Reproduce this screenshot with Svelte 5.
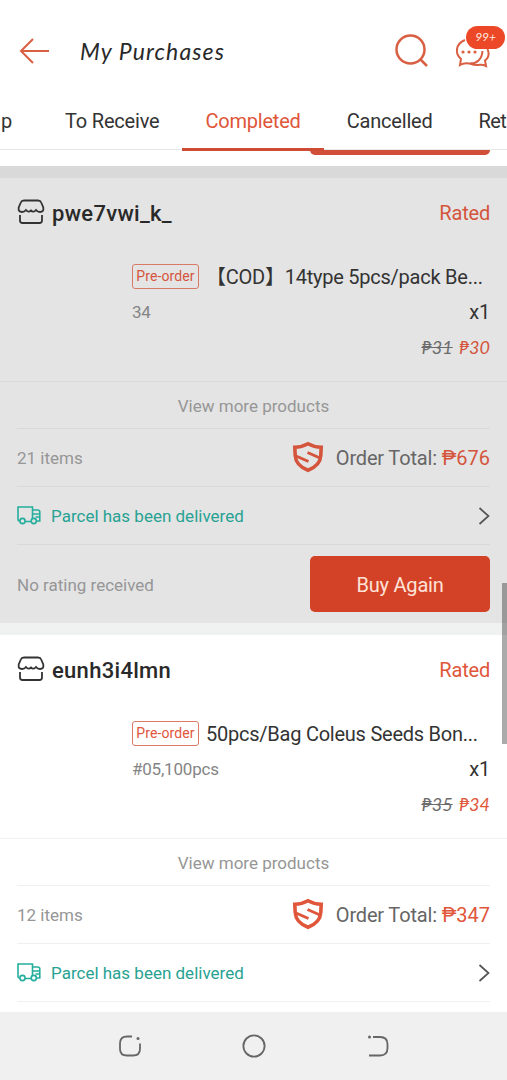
<script lang="ts">
    interface Order {
        shop: string;
        title: string;
        variation: string;
        oldPrice: number;
        price: number;
        items: number;
        total: number;
        pressed?: boolean;
        note?: string;
    }

    const orders: Order[] = [
        {
            shop: "pwe7vwi_k_",
            title: "【COD】14type 5pcs/pack Be...",
            variation: "34",
            oldPrice: 31,
            price: 30,
            items: 21,
            total: 676,
            pressed: true,
            note: "No rating received",
        },
        {
            shop: "eunh3i4lmn",
            title: "50pcs/Bag Coleus Seeds Bon...",
            variation: "#05,100pcs",
            oldPrice: 35,
            price: 34,
            items: 12,
            total: 347,
        },
    ];

    const tabs = ["p", "To Receive", "Completed", "Cancelled", "Ret"];
    let active = $state("Completed");
</script>

<div class="screen">
    <header>
        <svg class="back" width="32" height="28" viewBox="0 0 32 28">
            <path d="M15 2 L3 14 L15 26 M3 14 H31" />
        </svg>
        <h1>My Purchases</h1>
        <svg class="search" width="36" height="36" viewBox="0 0 36 36">
            <circle cx="16.5" cy="16.5" r="14" />
            <path d="M26.5 26.5 L33 33" />
        </svg>
        <div class="chat">
            <svg width="36" height="32" viewBox="0 0 36 32">
                <path d="M10 4 C0 8 0 18 6 23 L5 29 Q9 26.500 14 27.500 C22 28 27 23 27.500 15" />
                <path d="M32.500 13 C34.500 18 33.500 22 30 24.500 L31 30 Q28 28.500 25 28.800 Q20 29.500 15 27.500" />
                <g class="dots">
                    <circle cx="8" cy="16" r="1.600" />
                    <circle cx="14" cy="16" r="1.600" />
                    <circle cx="20" cy="16" r="1.600" />
                </g>
            </svg>
            <span class="badge">99+</span>
        </div>
    </header>

    <nav class="tabs">
        {#each tabs as tab}
            <button class:active={tab === active} onclick={() => (active = tab)}>
                {tab}
            </button>
        {/each}
    </nav>

    <main>
        <!-- end of the order that is scrolled under the tabs -->
        <div class="previous"><div class="clipped"></div></div>

        {#each orders as order}
            <section class:pressed={order.pressed}>
                <div class="shop">
                    <svg width="28" height="26" viewBox="0 0 28 26">
                        <path d="M7 1.500 H21 Q23.500 1.500 24.200 3.500 L26.300 8.500 Q27 13 23 13 Q20.500 13 19 11 Q16.500 14 14 11.500 Q11.500 14 9 11 Q7.500 13 5 13 Q1 13 1.700 8.500 L3.800 3.500 Q4.500 1.500 7 1.500 Z" />
                        <path d="M3 16 V21.500 Q3 24 5.500 24 H22.500 Q25 24 25 21.500 V16" />
                    </svg>
                    <h2>{order.shop}</h2>
                    <span class="status">Rated</span>
                </div>

                <div class="product">
                    <div class="title">
                        <span class="tag">Pre-order</span>
                        <span class="name">{order.title}</span>
                    </div>
                    <div class="variation">
                        <span>{order.variation}</span>
                        <span class="qty">x1</span>
                    </div>
                    <div class="prices">
                        <s>₱{order.oldPrice}</s>
                        <span>₱{order.price}</span>
                    </div>
                </div>

                <div class="more">View more products</div>

                <div class="row">
                    <span class="muted">{order.items} items</span>
                    <svg class="shield" width="32" height="32" viewBox="0 0 32 32">
                        <path class="plate" d="M16 2.800 Q22 6.200 29.200 6.200 L28.800 14.500 C28.300 23 22.500 26.800 16 29.300 C9.500 26.800 3.700 23 3.200 14.500 L2.800 6.200 Q10 6.200 16 2.800 Z" />
                        <path class="mark" d="M15.500 11.500 L28 17 M4 15 L16.500 20.500" />
                    </svg>
                    <span class="total">Order Total: <b>₱{order.total}</b></span>
                </div>

                <div class="row">
                    <svg class="truck" width="24" height="19" viewBox="0 0 24 19">
                        <path d="M3 15 H2.500 Q1 15 1 13.500 V1 H15.500 V12.500 M8 15.500 H14 M15.500 4 H20.500 Q22.800 4 22.800 6 V15 H19.500 M15.500 8 H22.800 M18.500 11 H22.800" />
                        <circle cx="5.500" cy="15" r="2.600" />
                        <circle cx="16.800" cy="15" r="2.600" />
                    </svg>
                    <span class="delivered">Parcel has been delivered</span>
                    <svg class="chevron" width="12" height="20" viewBox="0 0 12 20">
                        <path d="M1.500 2 L10.500 10 L1.500 18" />
                    </svg>
                </div>

                {#if order.note}
                    <div class="row actions">
                        <span class="muted">{order.note}</span>
                        <button class="buy">Buy Again</button>
                    </div>
                {/if}
            </section>
        {/each}
        <div class="scrollbar"></div>
    </main>

    <footer>
        <svg width="24" height="24" viewBox="0 0 24 24">
            <path d="M14 2.500 H9 Q2 2.500 2 9.500 V15 Q2 21.500 9 21.500 H15 Q22 21.500 22 15 V9.500" />
            <circle class="dot" cx="20" cy="4.500" r="1.500" />
        </svg>
        <svg width="24" height="24" viewBox="0 0 24 24">
            <circle cx="12" cy="12" r="10.600" />
        </svg>
        <svg width="24" height="24" viewBox="0 0 24 24">
            <path d="M7 3 H14 Q21.500 3 21.500 10 V14 Q21.500 21.500 14 21.500 H3" />
            <circle class="dot" cx="3.500" cy="3" r="1.500" />
        </svg>
    </footer>
</div>

<style>
    :global(body) {
        margin: 0;
    }
    .screen {
        --red: #e0563a;
        width: 507px;
        height: 1080px;
        display: flex;
        flex-direction: column;
        overflow: hidden;
        background: #fff;
        color: #333;
        font-family: Roboto, "Noto Sans CJK SC", sans-serif;
        font-size: 20px;
        letter-spacing: -0.2px;
    }
    svg {
        flex: none;
        fill: none;
        stroke: currentColor;
        stroke-width: 2;
    }
    button {
        border: 0;
        padding: 0;
        background: none;
        color: inherit;
        font: inherit;
        letter-spacing: inherit;
    }
    header {
        height: 94px;
        box-sizing: border-box;
        padding: 8px 16px 0 18px;
        flex: none;
        display: flex;
        align-items: center;
        color: #d95f43;
    }
    h1 {
        flex: 1;
        margin: 0 0 0 30px;
        font-family: Lato, sans-serif;
        font-size: 23px;
        font-weight: 400;
        font-style: italic;
        letter-spacing: 1.1px;
        color: #292929;
    }
    .search {
        margin-right: 25px;
        stroke-width: 2.5;
    }
    .chat {
        position: relative;
        height: 32px;
    }
    .chat svg {
        margin-top: 1px;
    }
    .dots,
    .dot {
        fill: currentColor;
        stroke: none;
    }
    .badge {
        position: absolute;
        left: 11px;
        top: -9px;
        width: 39px;
        height: 23px;
        border-radius: 12px;
        background: #ec4727;
        color: #ffe9df;
        font: italic 12px/22px Lato, sans-serif;
        text-align: center;
    }
    .tabs {
        height: 56px;
        box-sizing: border-box;
        flex: none;
        display: flex;
        border-bottom: 1px solid #e7e7e7;
        position: relative;
        z-index: 1;
    }
    .tabs button {
        flex: none;
        height: 57px;
        box-sizing: border-box;
        padding: 0 23px;
        border-bottom: 3px solid transparent;
    }
    .tabs button:first-child {
        padding: 0 30px 0 1px;
    }
    .tabs button:last-child {
        padding-right: 0;
        letter-spacing: -0.6px;
    }
    .tabs .active {
        color: var(--red);
        border-color: #cf4c34;
    }
    main {
        flex: 1;
        min-height: 0;
        overflow: hidden;
        position: relative;
    }
    .previous {
        height: 16px;
        border-bottom: 12px solid #d9d9d9;
    }
    .clipped {
        width: 180px;
        height: 5px;
        margin-left: 310px;
        border-radius: 0 0 5px 5px;
        background: #d14f38;
    }
    section {
        --line: #f0f0f0;
        height: 445px;
        border-bottom: 12px solid #f0f1f1;
    }
    .pressed {
        --line: #d9d9d9;
        --red: #d4553c;
        background: #e4e4e4;
    }
    .shop {
        height: 68px;
        padding: 0 17px;
        display: flex;
        align-items: center;
    }
    .shop svg {
        margin-bottom: 1px;
        stroke-width: 1.8;
    }
    h2 {
        flex: 1;
        margin: 2px 0 0 7px;
        font-size: 22px;
        font-weight: 500;
        letter-spacing: 0.3px;
        color: #292929;
    }
    .status {
        margin-top: 1px;
        color: var(--red);
    }
    .product {
        height: 136px;
        box-sizing: border-box;
        padding: 13px 17px 0 132px;
        border-bottom: 1px solid var(--line);
    }
    .title,
    .variation,
    .prices {
        height: 36px;
        display: flex;
        align-items: center;
    }
    .title {
        height: 35px;
    }
    .tag {
        width: 67px;
        height: 25px;
        box-sizing: border-box;
        flex: none;
        border: 1px solid #d97a68;
        border-radius: 3px;
        color: var(--red);
        font-size: 14px;
        line-height: 23px;
        letter-spacing: 0.1px;
        text-align: center;
    }
    .name {
        margin-left: 7px;
        line-height: 24px;
        letter-spacing: -0.24px;
        white-space: nowrap;
    }
    .variation {
        justify-content: space-between;
        font-size: 17px;
        color: #858585;
    }
    .qty {
        font-size: 20px;
        color: #333;
    }
    .prices {
        height: 34px;
        justify-content: flex-end;
        gap: 6px;
        font-family: Lato, Roboto, sans-serif;
        font-size: 18px;
        font-style: italic;
        letter-spacing: 0;
        color: var(--red);
    }
    s {
        color: #6c6c6c;
    }
    .more {
        height: 47px;
        box-sizing: border-box;
        margin: 0 17px;
        border-bottom: 1px solid var(--line);
        font-size: 17px;
        line-height: 48px;
        letter-spacing: 0;
        text-align: center;
        color: #969696;
    }
    .row {
        height: 58px;
        box-sizing: border-box;
        margin: 0 17px;
        display: flex;
        align-items: center;
        border-bottom: 1px solid var(--line);
    }
    .muted {
        flex: 1;
        font-size: 17px;
        letter-spacing: 0;
        color: #969696;
    }
    .shield {
        margin: 0 12px 2px 0;
    }
    .plate,
    .mark {
        stroke: var(--red);
        stroke-width: 3.6;
    }
    .mark {
        stroke-width: 3;
    }
    .total {
        letter-spacing: -0.17px;
        color: #666;
    }
    b {
        font-weight: 400;
        letter-spacing: 0;
        color: var(--red);
    }
    .truck {
        stroke: #25ae9d;
        stroke-width: 1.6;
    }
    .delivered {
        flex: 1;
        margin-left: 10px;
        font-size: 17px;
        letter-spacing: 0;
        color: #28a293;
    }
    .chevron {
        stroke-width: 1.7;
        color: #555;
    }
    .actions {
        height: 78px;
        align-items: flex-start;
        border-bottom: 0;
        padding-top: 11px;
    }
    .actions .muted {
        line-height: 59px;
    }
    .buy {
        width: 180px;
        height: 56px;
        padding-top: 2px;
        border-radius: 5px;
        background: #d34227;
        color: #ffe3d8;
    }
    .scrollbar {
        position: absolute;
        right: 0;
        top: 433px;
        width: 5px;
        height: 161px;
        background: rgba(0, 0, 0, 0.33);
    }
    footer {
        height: 68px;
        flex: none;
        display: flex;
        justify-content: center;
        align-items: center;
        gap: 100px;
        background: #f0f0f0;
        color: #666;
    }
    footer svg {
        stroke-width: 1.8;
    }
</style>
